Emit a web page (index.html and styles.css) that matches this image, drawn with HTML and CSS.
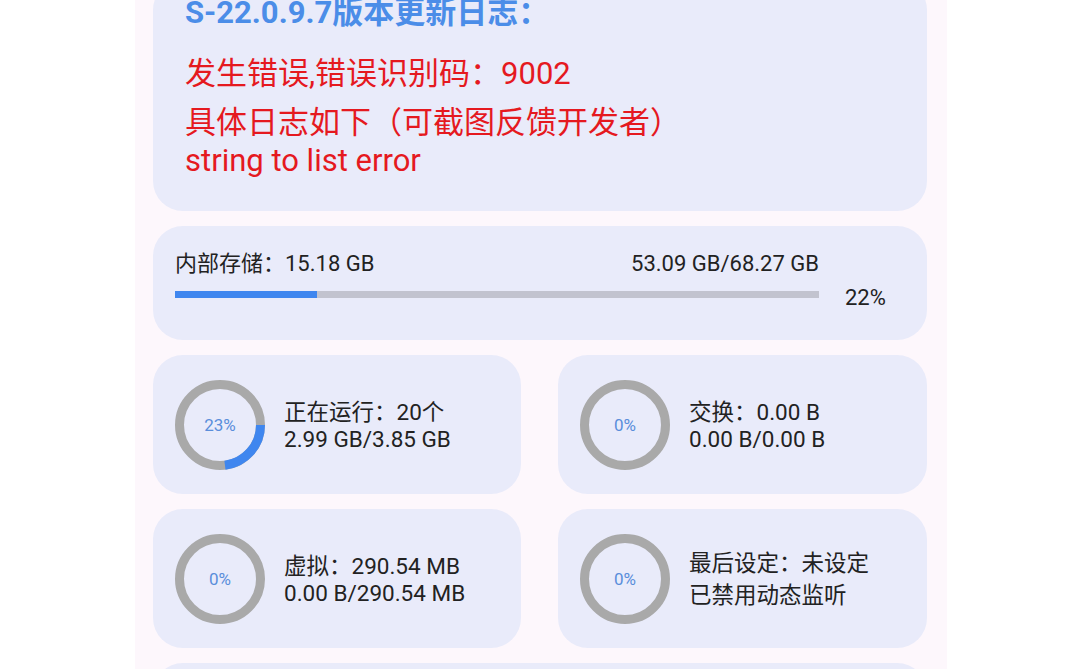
FILE: index.html
```html
<!DOCTYPE html>
<html lang="zh-CN">
<head>
<meta charset="utf-8">
<title>更新日志</title>
<link rel="stylesheet" href="styles.css">
</head>
<body>
<div class="panel">
  <section class="card log">
    <div class="log-title">S-22.0.9.7版本更新日志：</div>
    <div class="log-line first">发生错误,错误识别码：9002</div>
    <div class="log-line second">具体日志如下（可截图反馈开发者）</div>
    <div class="log-line third">string to list error</div>
  </section>

  <section class="card storage">
    <div class="storage-top">
      <span>内部存储：15.18 GB</span>
      <span>53.09 GB/68.27 GB</span>
    </div>
    <div class="storage-bar-row">
      <div class="bar"><div class="bar-fill" style="width:22%"></div></div>
      <div class="bar-pct">22%</div>
    </div>
  </section>

  <div class="grid">
    <section class="card mini">
      <div class="ring">
        <svg viewBox="0 0 90 90" width="90" height="90">
          <circle cx="45" cy="45" r="40.5" class="ring-bg"/>
          <circle cx="45" cy="45" r="40.5" class="ring-fg" stroke-dasharray="58.5 254.5"/>
        </svg>
        <span class="ring-pct">23%</span>
      </div>
      <div class="mini-text">
        <div>正在运行：20个</div>
        <div>2.99 GB/3.85 GB</div>
      </div>
    </section>

    <section class="card mini">
      <div class="ring">
        <svg viewBox="0 0 90 90" width="90" height="90">
          <circle cx="45" cy="45" r="40.5" class="ring-bg"/>
        </svg>
        <span class="ring-pct">0%</span>
      </div>
      <div class="mini-text">
        <div>交换：0.00 B</div>
        <div>0.00 B/0.00 B</div>
      </div>
    </section>

    <section class="card mini">
      <div class="ring">
        <svg viewBox="0 0 90 90" width="90" height="90">
          <circle cx="45" cy="45" r="40.5" class="ring-bg"/>
        </svg>
        <span class="ring-pct">0%</span>
      </div>
      <div class="mini-text">
        <div>虚拟：290.54 MB</div>
        <div>0.00 B/290.54 MB</div>
      </div>
    </section>

    <section class="card mini">
      <div class="ring">
        <svg viewBox="0 0 90 90" width="90" height="90">
          <circle cx="45" cy="45" r="40.5" class="ring-bg"/>
        </svg>
        <span class="ring-pct">0%</span>
      </div>
      <div class="mini-text">
        <div>最后设定：未设定</div>
        <div>已禁用动态监听</div>
      </div>
    </section>
  </div>

  <section class="card next"></section>
</div>
</body>
</html>
```

FILE: styles.css
```css
* { box-sizing: border-box; }

html, body {
  margin: 0;
  padding: 0;
  background: #ffffff;
  overflow: hidden;
}

body {
  font-family: Roboto, "Noto Sans CJK SC", sans-serif;
  color: #222222;
}

.panel {
  width: 812px;
  margin-left: 135px;
  background: #fdf7fc;
  padding: 0 20px 0 18px;
  min-height: 669px;
}

.card {
  background: #e9ebfa;
  border-radius: 30px;
}

.log {
  margin-top: -20px;
  padding: 18px 32px 32px;
}

.log-title {
  font-size: 31px;
  font-weight: bold;
  line-height: 30px;
  color: #4b8de8;
  margin-bottom: 20px;
}

.log-line {
  font-size: 31px;
  color: #e5191f;
}

.log-line.second {
  margin-top: 4px;
}

.storage {
  margin-top: 15px;
  padding: 19px 22px 29px;
  font-size: 22px;
}

.storage-top {
  display: flex;
  align-items: baseline;
  justify-content: space-between;
  margin-right: 86px;
}

.storage-bar-row {
  display: flex;
  align-items: flex-start;
  margin-top: 8px;
}

.bar {
  flex: 1;
  height: 7px;
  margin-top: 6px;
  background: #c2c3cf;
}

.bar-fill {
  height: 100%;
  background: #3f86ef;
}

.bar-pct {
  width: 60px;
  margin-left: 26px;
  line-height: 26px;
}

.grid {
  margin-top: 15px;
  display: grid;
  grid-template-columns: 368px 369px;
  column-gap: 37px;
  row-gap: 15px;
}

.mini {
  height: 139px;
  display: flex;
  align-items: center;
  padding: 0 22px;
  gap: 19px;
}

.ring {
  display: grid;
  place-items: center;
  width: 90px;
  height: 90px;
  flex: none;
}

.ring svg,
.ring-pct {
  grid-area: 1 / 1;
}

.ring-bg {
  fill: none;
  stroke: #a9a9a9;
  stroke-width: 9;
}

.ring-fg {
  fill: none;
  stroke: #3f86ef;
  stroke-width: 9;
}

.ring-pct {
  font-size: 17px;
  color: #5a8edb;
}

.mini-text {
  font-size: 22.5px;
  margin-bottom: 3px;
}

.next {
  margin-top: 15px;
  height: 100px;
}
```
